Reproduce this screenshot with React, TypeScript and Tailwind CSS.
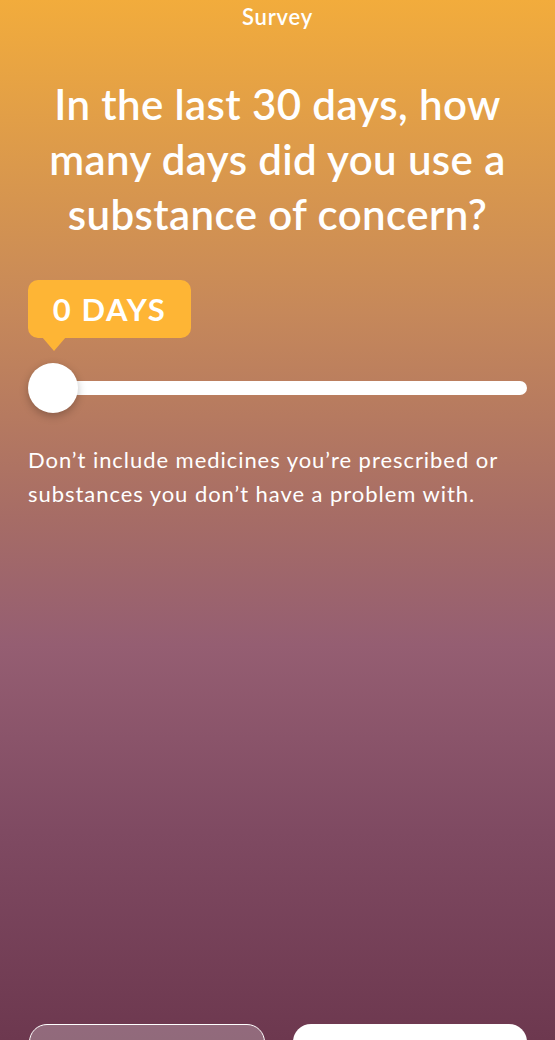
export default function App() {
  return (
    <div
      className="relative w-[555px] h-[1040px] overflow-hidden bg-[linear-gradient(180deg,#f2ac3c_0%,#c6885a_30%,#a66c66_50%,#955e72_62%,#7f4a62_80%,#6d384f_100%)] text-white"
      style={{ fontFamily: '"Lato", "Noto Sans", sans-serif' }}
    >
      <div className="flex flex-col">
        <div className="h-[33px] flex items-center justify-center text-[22px] font-semibold tracking-[0.8px]">Survey</div>
        <h1 className="mt-[44px] px-[26px] text-center text-[42px] leading-[55px] font-semibold tracking-[0.4px]">
          In the last 30 days, how many days did you use a substance of concern?
        </h1>
        <div className="mt-[38px] px-[28px]">
          <div className="relative w-[163px] h-[58px] rounded-[10px] bg-[#feb535] flex items-center justify-center text-[31px] font-bold tracking-[1.6px]">
            0 DAYS
            <div className="absolute left-[14px] top-[57px] w-0 h-0 border-l-[12px] border-r-[12px] border-t-[14px] border-l-transparent border-r-transparent border-t-[#feb535]" />
          </div>
          <div className="relative mt-[25px] h-[50px] flex items-center">
            <div className="absolute left-[20px] right-0 h-[14px] rounded-full bg-white" />
            <div className="relative w-[50px] h-[50px] rounded-full bg-white shadow-[0_3px_8px_rgba(0,0,0,0.25)]" />
          </div>
          <p className="mt-[30px] text-[22px] leading-[34px] font-normal tracking-[0.95px]">
            Don’t include medicines you’re prescribed or substances you don’t have a problem with.
          </p>
        </div>
      </div>
      <div className="absolute left-[29px] right-[28px] top-[1024px] flex gap-[28px]">
        <div className="flex-1 h-[60px] rounded-[18px] border-[1.5px] border-white bg-[rgba(255,255,255,0.25)]" />
        <div className="flex-1 h-[60px] rounded-[18px] bg-white" />
      </div>
    </div>
  );
}
